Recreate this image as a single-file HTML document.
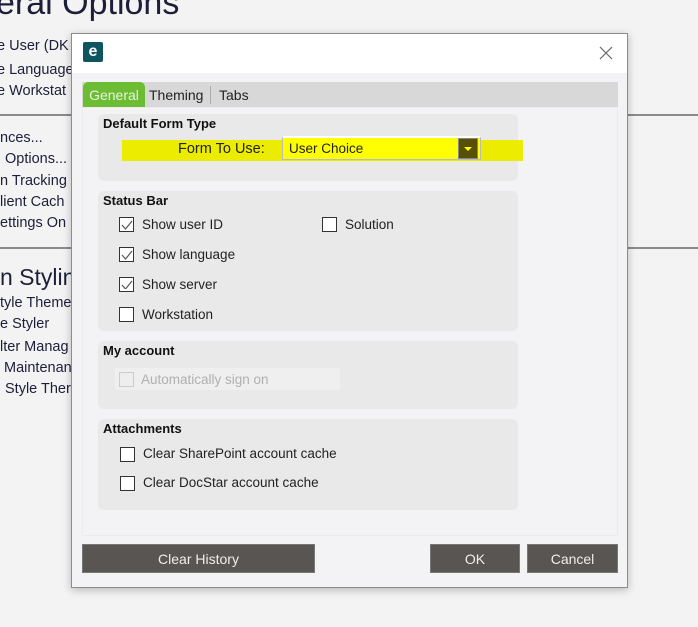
<!DOCTYPE html>
<html><head><meta charset="utf-8"><style>
*{margin:0;padding:0;box-sizing:border-box}
body{width:698px;height:627px;overflow:hidden;background:#f3f3f3;position:relative;font-family:"Liberation Sans",sans-serif;color:#222}
.bg{position:absolute;white-space:nowrap;font-size:14.5px;color:#1e1e3a}
.hl{position:absolute;left:0;width:698px;height:2px;background:#8a8a8a}
.dlg{position:absolute;left:71px;top:33px;width:557px;height:555px;background:#f3f3f5;border:1px solid #8c8c8c;box-shadow:0 2px 8px rgba(0,0,0,.25)}
.tb{position:absolute;left:0;top:0;width:555px;height:39px;background:#fff}
.a{position:absolute}
.grp{position:absolute;left:26px;width:420px;background:#e9e9e9;border-radius:6px}
.gt{position:absolute;left:5px;top:2px;font-size:13px;font-weight:bold;color:#111}
.cb{position:absolute;width:15px;height:15px;border:1px solid #333;background:#fff}
.lb{position:absolute;font-size:13.5px;color:#222;white-space:nowrap}
.btn{position:absolute;top:510px;height:29px;background:#595553;color:#eee;font-size:14px;text-align:center;line-height:29px;border:1px solid #777}
</style></head><body>
<div class="bg" style="left:-4px;top:-16px;font-size:34px">eral Options</div>
<div class="bg" style="left:-3px;top:38px">e User (DK</div>
<div class="bg" style="left:-3px;top:62px">e Language</div>
<div class="bg" style="left:-3px;top:83px">e Workstat</div>
<div class="hl" style="top:114px"></div>
<div class="bg" style="left:0;top:130px">nces...</div>
<div class="bg" style="left:5px;top:151px">Options...</div>
<div class="bg" style="left:0;top:173px">n Tracking</div>
<div class="bg" style="left:0;top:194px">lient Cach</div>
<div class="bg" style="left:0;top:215px">ettings On</div>
<div class="hl" style="top:247px"></div>
<div class="bg" style="left:0;top:264px;font-size:23px">n Stylin</div>
<div class="bg" style="left:0;top:295px">tyle Theme</div>
<div class="bg" style="left:0;top:316px">e Styler</div>
<div class="bg" style="left:0;top:339px">lter Manag</div>
<div class="bg" style="left:4px;top:360px">Maintenan</div>
<div class="bg" style="left:5px;top:381px">Style Ther</div>

<div class="dlg">
 <div class="tb">
  <div class="a" style="left:11px;top:8px;width:20px;height:20px;background:#0f5560;color:#fff;font-weight:bold;font-size:16px;line-height:19px;text-align:center;border-radius:2px">e</div>
  <svg class="a" style="left:527px;top:12px" width="14" height="14"><path d="M1 1L13 13M13 1L1 13" stroke="#666" stroke-width="1.2"/></svg>
 </div>
 <div class="a" style="left:10px;top:48px;width:536px;height:25px;background:#d8d8d8"></div>
 <div class="a" style="left:11px;top:48px;width:62px;height:26px;background:#6cbd34;border-radius:5px 5px 0 0;color:#e8f4e0;font-size:14px;line-height:26px;text-align:center">General</div>
 <div class="a" style="left:77px;top:53px;font-size:14px;color:#222">Theming</div>
 <div class="a" style="left:138px;top:52px;width:1px;height:18px;background:#aaa"></div>
 <div class="a" style="left:147px;top:53px;font-size:14px;color:#222">Tabs</div>
 <div class="a" style="left:10px;top:73px;width:536px;height:429px;background:#f3f3f5;border:1px solid #ececee"></div>

 <div class="grp" style="top:80px;height:67px"><div class="gt">Default Form Type</div></div>
 <div class="a" style="left:50px;top:106px;width:401px;height:21px;background:#ecec00"></div>
 <div class="lb" style="left:106px;top:107px;font-size:14.5px;color:#222">Form To Use:</div>
 <div class="a" style="left:210px;top:102px;width:199px;height:24px;background:#ffff00;border:1px solid #bbb;border-top:2px solid #fff"></div>
 <div class="lb" style="left:217px;top:107px;font-size:13.5px">User Choice</div>
 <div class="a" style="left:386px;top:104px;width:20px;height:21px;background:#575000;border:1px solid #888"></div>
 <div class="a" style="left:392px;top:113px;width:0;height:0;border-left:4px solid transparent;border-right:4px solid transparent;border-top:4px solid #ff0"></div>

 <div class="grp" style="top:157px;height:140px"><div class="gt">Status Bar</div></div>
 <div class="cb" style="left:47px;top:183px"></div><div class="lb" style="left:70px;top:183px">Show user ID</div>
 <div class="cb" style="left:250px;top:183px"></div><div class="lb" style="left:273px;top:183px">Solution</div>
 <div class="cb" style="left:47px;top:213px"></div><div class="lb" style="left:70px;top:213px">Show language</div>
 <div class="cb" style="left:47px;top:243px"></div><div class="lb" style="left:70px;top:243px">Show server</div>
 <div class="cb" style="left:47px;top:273px"></div><div class="lb" style="left:70px;top:273px">Workstation</div>
 <svg class="a" style="left:49px;top:185px" width="12" height="70"><path d="M1 6L4.5 10L11 2M1 36L4.5 40L11 32M1 66L4.5 70L11 62" stroke="#555" stroke-width="1.2" fill="none"/></svg>

 <div class="grp" style="top:307px;height:68px"><div class="gt">My account</div></div>
 <div class="a" style="left:43px;top:334px;width:225px;height:22px;background:#efefef"></div>
 <div class="cb" style="left:47px;top:338px;border-color:#ccc;background:#eee"></div>
 <div class="lb" style="left:69px;top:338px;color:#b0b0b0">Automatically sign on</div>

 <div class="grp" style="top:385px;height:91px"><div class="gt">Attachments</div></div>
 <div class="cb" style="left:48px;top:413px"></div><div class="lb" style="left:71px;top:412px">Clear SharePoint account cache</div>
 <div class="cb" style="left:48px;top:442px"></div><div class="lb" style="left:71px;top:441px">Clear DocStar account cache</div>

 <div class="btn" style="left:10px;width:233px">Clear History</div>
 <div class="btn" style="left:358px;width:90px">OK</div>
 <div class="btn" style="left:455px;width:91px">Cancel</div>
</div>
</body></html>
